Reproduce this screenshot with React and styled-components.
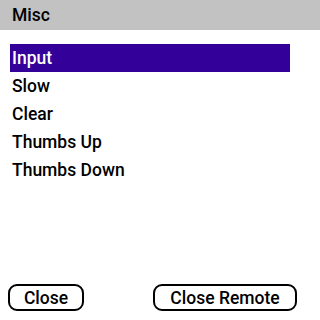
import React from 'react'
import styled, { createGlobalStyle } from 'styled-components'

const Global = createGlobalStyle`
  html, body {
    margin: 0;
    padding: 0;
    background: #ffffff;
  }
  * {
    box-sizing: border-box;
  }
`

const Screen = styled.div`
  display: flex;
  flex-direction: column;
  width: 320px;
  height: 320px;
  background: #ffffff;
  font-family: 'Roboto', 'DejaVu Sans', sans-serif;
  font-weight: 500;
  font-size: 17.5px;
  color: #000000;
  overflow: hidden;
`

const TitleBar = styled.div`
  display: flex;
  align-items: center;
  height: 30px;
  padding-left: 12px;
  background: #c2c2c2;
`

const List = styled.ul`
  list-style: none;
  margin: 14px 0 0 10px;
  padding: 0;
  width: 280px;
  flex: 1;
`

const Item = styled.li`
  display: flex;
  align-items: center;
  height: 28px;
  padding-left: 2px;
  background: ${p => (p.selected ? '#330099' : 'transparent')};
  color: ${p => (p.selected ? '#ffffff' : '#000000')};
`

const Footer = styled.div`
  display: flex;
  align-items: center;
  height: 27px;
  margin-bottom: 9px;
  padding-left: 8px;
  gap: 69px;
`

const Button = styled.button`
  height: 27px;
  width: ${p => p.w}px;
  border: 2px solid #000000;
  border-radius: 9px;
  background: #ffffff;
  font-family: inherit;
  font-weight: inherit;
  font-size: inherit;
  color: #000000;
  padding: 0;
`

const items = ['Input', 'Slow', 'Clear', 'Thumbs Up', 'Thumbs Down']

export default function App() {
  return (
    <>
      <Global />
      <Screen>
        <TitleBar>Misc</TitleBar>
        <List>
          {items.map((label, i) => (
            <Item key={label} selected={i === 0}>{label}</Item>
          ))}
        </List>
        <Footer>
          <Button w={76}>Close</Button>
          <Button w={144}>Close Remote</Button>
        </Footer>
      </Screen>
    </>
  )
}
